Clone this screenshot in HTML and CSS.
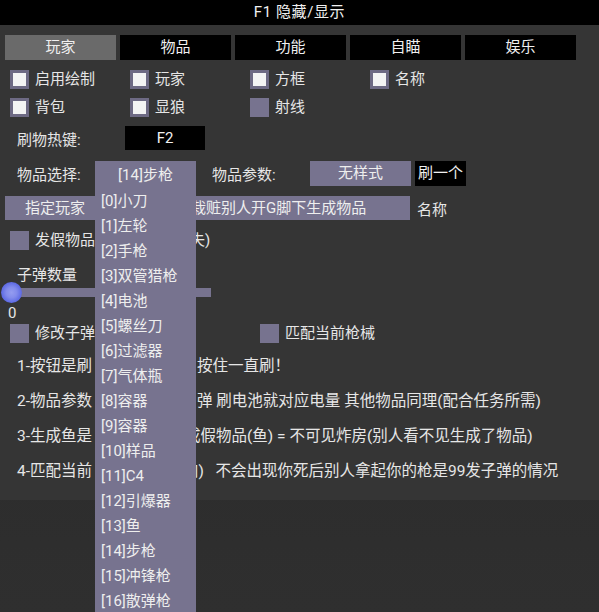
FILE: index.html
```html
<!DOCTYPE html>
<html lang="zh-CN">
<head>
<meta charset="utf-8">
<title>F1 隐藏/显示</title>
<link rel="stylesheet" href="styles.css">
</head>
<body>
<div class="page">
  <div class="titlebar">F1 隐藏/显示</div>
  <div class="panel">
    <div class="tabs">
      <div class="tab active">玩家</div>
      <div class="tab">物品</div>
      <div class="tab">功能</div>
      <div class="tab">自瞄</div>
      <div class="tab">娱乐</div>
    </div>
    <div class="checks">
      <label class="check"><span class="box on"></span>启用绘制</label>
      <label class="check"><span class="box on"></span>玩家</label>
      <label class="check"><span class="box on"></span>方框</label>
      <label class="check"><span class="box on"></span>名称</label>
      <label class="check"><span class="box on"></span>背包</label>
      <label class="check"><span class="box on"></span>显狼</label>
      <label class="check"><span class="box"></span>射线</label>
    </div>
    <div class="row hotkey">
      <span class="label hk">刷物热键:</span>
      <span class="keybox">F2</span>
    </div>
    <div class="row items">
      <span class="label sel">物品选择:</span>
      <span class="combo-slot"></span>
      <span class="label param">物品参数:</span>
      <span class="purple-btn style">无样式</span>
      <span class="black-btn">刷一个</span>
    </div>
    <div class="row target">
      <span class="purple-btn player">指定玩家</span>
      <span class="input">栽赃别人开G脚下生成物品</span>
      <span class="label name">名称</span>
    </div>
    <div class="row single">
      <label class="check"><span class="box"></span><span class="fake-lead">发假物品(</span><span>失)</span></label>
    </div>
    <div class="ammo-label">子弹数量</div>
    <div class="slider">
      <div class="track"></div>
      <div class="thumb"></div>
    </div>
    <div class="value">0</div>
    <div class="row double">
      <label class="check wide"><span class="box"></span>修改子弹</label>
      <label class="check"><span class="box"></span>匹配当前枪械</label>
    </div>
    <div class="notes">
      <p class="note"><span class="lead">1-按钮是刷</span><span class="rest">按住一直刷！</span></p>
      <p class="note"><span class="lead">2-物品参数</span><span class="rest">弹 刷电池就对应电量 其他物品同理(配合任务所需)</span></p>
      <p class="note n3"><span class="lead">3-生成鱼是</span><span class="rest">成假物品(鱼) = 不可见炸房(别人看不见生成了物品)</span></p>
      <p class="note n4"><span class="lead">4-匹配当前</span><span class="rest">内)   不会出现你死后别人拿起你的枪是99发子弹的情况</span></p>
    </div>
  </div>
  <div class="dropdown">
    <div class="combo-head">[14]步枪</div>
    <ul class="options">
      <li>[0]小刀</li>
      <li>[1]左轮</li>
      <li>[2]手枪</li>
      <li>[3]双管猎枪</li>
      <li>[4]电池</li>
      <li>[5]螺丝刀</li>
      <li>[6]过滤器</li>
      <li>[7]气体瓶</li>
      <li>[8]容器</li>
      <li>[9]容器</li>
      <li>[10]样品</li>
      <li>[11]C4</li>
      <li>[12]引爆器</li>
      <li>[13]鱼</li>
      <li>[14]步枪</li>
      <li>[15]冲锋枪</li>
      <li>[16]散弹枪</li>
    </ul>
  </div>
</div>
</body>
</html>
```
FILE: styles.css
```css
* { box-sizing: border-box; }
html, body {
  margin: 0;
  padding: 0;
}
body {
  width: 599px;
  height: 612px;
  overflow: hidden;
  background: linear-gradient(#262626, #2f2f2f);
  font-family: Roboto, "Noto Sans CJK SC", sans-serif;
  font-size: 15px;
  color: #e6e6e6;
}
.page {
  position: relative;
  width: 599px;
  height: 612px;
}
.titlebar {
  height: 25px;
  background: #000;
  color: #f0f0f0;
  font-size: 15px;
  line-height: 25px;
  text-align: center;
  letter-spacing: 0.6px;
}
.panel {
  height: 475px;
  background: #353535;
  display: flex;
  flex-direction: column;
}
.tabs {
  margin-top: 10px;
  padding-left: 5px;
  display: flex;
  gap: 4px;
  height: 25px;
}
.tab {
  width: 111px;
  background: #000;
  color: #f0f0f0;
  text-align: center;
  line-height: 25px;
}
.tab.active { background: #6a6a6a; }

.checks {
  margin-top: 10px;
  padding-left: 10px;
  display: grid;
  grid-template-columns: repeat(4, 120px);
  row-gap: 9px;
}
.check {
  display: flex;
  align-items: center;
  gap: 6px;
  height: 19px;
  line-height: 19px;
  white-space: nowrap;
}
.box {
  width: 19px;
  height: 19px;
  flex: none;
  background: #77738f;
}
.box.on {
  border: 3px solid #6e6a84;
  background: #f4f4f4;
}

.row {
  display: flex;
  align-items: center;
}
.label { white-space: nowrap; flex: none; }
.hotkey {
  margin-top: 9px;
  height: 24px;
  padding-left: 17px;
}
.hk { width: 108px; }
.keybox {
  width: 80px;
  height: 24px;
  line-height: 24px;
  background: #000;
  color: #f0f0f0;
  text-align: center;
}
.items {
  margin-top: 11px;
  height: 25px;
  padding-left: 17px;
}
.sel { width: 78px; }
.combo-slot {
  width: 101px;
  flex: none;
  height: 25px;
}
.param { margin-left: 16px; width: 98px; }
.purple-btn {
  background: #77738f;
  color: #eeeeee;
  text-align: center;
  height: 100%;
  flex: none;
}
.style {
  width: 101px;
  line-height: 25px;
}
.black-btn {
  margin-left: 4px;
  width: 51px;
  height: 25px;
  line-height: 25px;
  background: #000;
  color: #f0f0f0;
  text-align: center;
  flex: none;
}
.target {
  margin-top: 10px;
  height: 24px;
  padding-left: 5px;
}
.player {
  width: 100px;
  line-height: 24px;
}
.input {
  margin-left: 4px;
  width: 301px;
  height: 24px;
  line-height: 24px;
  padding-left: 82px;
  background: #77738f;
  color: #eeeeee;
  white-space: nowrap;
  overflow: hidden;
  flex: none;
}
.name { margin-left: 7px; }
.single {
  margin-top: 11px;
  padding-left: 10px;
}
.fake-lead {
  display: inline-block;
  width: 155px;
  margin-right: -6px;
}
.ammo-label {
  margin-top: 15px;
  padding-left: 17px;
  height: 20px;
  line-height: 20px;
}
.slider {
  position: relative;
  height: 15px;
  margin-left: 10px;
  width: 201px;
  display: flex;
  align-items: center;
}
.track {
  width: 100%;
  height: 9px;
  background: #77738f;
}
.thumb {
  position: absolute;
  left: -9px;
  top: -3px;
  width: 21px;
  height: 21px;
  border-radius: 50%;
  background: radial-gradient(circle at 50% 50%, #949cf0 0, #838cec 35%, #5a67e3 72%, #4b59dd 100%);
}
.value {
  margin-top: 3px;
  padding-left: 8px;
  height: 20px;
  line-height: 20px;
}
.double {
  margin-top: 1px;
  padding-left: 10px;
}
.check.wide { width: 250px; }
.notes {
  margin-top: 11px;
  padding-left: 17px;
  display: flex;
  flex-direction: column;
  gap: 11px;
  font-size: 15.5px;
}
.note {
  margin: 0;
  height: 24px;
  line-height: 24px;
  white-space: pre;
  display: flex;
}
.lead {
  width: 180px;
  flex: none;
}
.n3 .lead { width: 168px; }
.n4 .lead { width: 166px; }

.dropdown {
  position: absolute;
  left: 95px;
  top: 161px;
  width: 101px;
  height: 460px;
  background: #77738f;
  color: #eeeeee;
}
.combo-head {
  height: 28px;
  line-height: 28px;
  text-align: center;
}
.options {
  list-style: none;
  margin: 0;
  padding: 0 0 0 6px;
}
.options li {
  height: 25px;
  line-height: 25px;
  white-space: nowrap;
}
```
